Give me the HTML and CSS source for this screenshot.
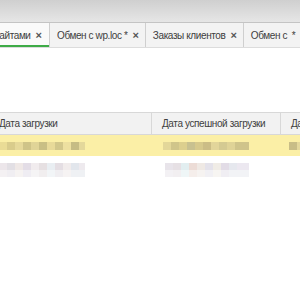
FILE: index.html
```html
<!DOCTYPE html>
<html lang="ru">
<head>
    <meta charset="UTF-8">
    <title>Обмен с сайтами</title>
    <link rel="stylesheet" href="styles.css">
</head>
<body>
    <div class="topbar"></div>
    <div class="tabs">
        <div class="tab active"><span class="label">Обмен с сайтами</span><span class="close">×</span></div>
        <div class="tab"><span class="label">Обмен с wp.loc *</span><span class="close">×</span></div>
        <div class="tab"><span class="label">Заказы клиентов</span><span class="close">×</span></div>
        <div class="tab"><span class="label">Обмен с &nbsp;*</span><span class="close">×</span></div>
    </div>

    <div class="content">
        <div class="grid">
            <div class="row head">
                <div class="cell c1">Дата загрузки</div>
                <div class="cell c2">Дата успешной загрузки</div>
                <div class="cell c3">Дата</div>
            </div>
            <div class="row current">
                <div class="cell c1"><span class="blur b1"></span></div>
                <div class="cell c2"><span class="blur b2"></span></div>
                <div class="cell c3"><span class="blur b3"></span></div>
            </div>
            <div class="row">
                <div class="cell c1"><span class="blur b4"></span></div>
                <div class="cell c2"><span class="blur b5"></span></div>
                <div class="cell c3"></div>
            </div>
        </div>
    </div>
</body>
</html>
```

FILE: styles.css
```css
body {
    margin: 0;
    font-family: "Liberation Sans", Arial, sans-serif;
    font-size: 10px;
    letter-spacing: -0.4px;
    color: #404040;
    background: #fff;
    overflow: hidden;
}
.topbar {
    height: 22px;
    background: linear-gradient(#cfcfcf, #e6e6e6);
    border-bottom: 1px solid #c4c4c4;
}
.tabs {
    display: flex;
    height: 24px;
    background: #f3f3f3;
    border-bottom: 1px solid #dcdcdc;
    white-space: nowrap;
}
.tab {
    display: flex;
    align-items: center;
    gap: 5px;
    padding: 0 6px 0 7px;
    border-right: 1px solid #cfcfcf;
    flex: none;
}
.tab.active {
    width: 50px;
    box-sizing: border-box;
    justify-content: flex-end;
    overflow: hidden;
    padding-right: 7px;
    background: #fafafa;
    box-shadow: inset 0 -2px 0 #3eab47;
}
.label {
    flex: none;
}
.close {
    font-weight: bold;
    font-size: 11px;
    letter-spacing: 0;
    color: #555;
}
.content {
    padding-top: 64px;
}
.grid {
    margin-left: -11px;
}
.row {
    display: flex;
    height: 21px;
    border-bottom: 1px solid #fff;
}
.row.head {
    background: #f2f2f2;
    border-top: 1px solid #d8d8d8;
    border-bottom: 1px solid #d8d8d8;
}
.row.current {
    background: #fbefa6;
}
.cell {
    display: flex;
    align-items: center;
    padding-left: 10px;
    flex: none;
    white-space: nowrap;
    overflow: hidden;
}
.c1 { width: 152px; }
.c2 { width: 118px; }
.c3 { width: 60px; }
.head .cell {
    border-right: 1px solid #d8d8d8;
}
.head .c3 { border-right: none; }
.blur {
    display: block;
    height: 8px;
}
.b1 {
    width: 86px;
    background: linear-gradient(90deg, #eadc96 0 8px, #d9cc8c 8px 16px, #e6d99a 16px 24px, #cfc488 24px 32px, #e0d497 32px 40px, #c9bf85 40px 48px, #e8da99 48px 56px, #d2c78b 56px 64px, #ede0a0 64px 72px, #c6bc84 72px 80px, #e4d89b 80px);
}
.b2 {
    width: 86px;
    margin-left: 2px;
    background: linear-gradient(90deg, #e3d799 0 8px, #d0c58a 8px 16px, #dccf8e 16px 24px, #c8c190 24px 32px, #d6c98c 32px 40px, #cbbd86 40px 48px, #e2d59a 48px 56px, #d4ca92 56px 64px, #dfd397 64px 72px, #cfc48b 72px);
}
.b3 {
    width: 16px;
    background: linear-gradient(90deg, #c8bd87 0 8px, #e4d89c 8px);
}
.b4 {
    width: 86px;
    height: 14px;
    margin-top: 4px;
    background:
        linear-gradient(90deg, #ece6ea 0 8px, #e2dfe4 8px 16px, #efe8e6 16px 24px, #e3dde6 24px 32px, #f1ecee 32px 40px, #e6e0e2 40px 48px, #e9eef2 48px 56px, #e4dee3 56px 64px, #f1ecec 64px 72px, #e2e6ec 72px 80px, #eeeaee 80px) top / 100% 7px no-repeat,
        linear-gradient(90deg, #f4f1f3 0 8px, #f0eef2 8px 16px, #f6f3f2 16px 24px, #efedf3 24px 32px, #f5f4f5 32px 40px, #f1eeef 40px 48px, #f2f5f7 48px 56px, #f0eef1 56px 64px, #f6f3f3 64px 72px, #eff1f4 72px) bottom / 100% 7px no-repeat;
}
.b5 {
    width: 84px;
    height: 14px;
    margin-top: 4px;
    margin-left: 4px;
    background:
        linear-gradient(90deg, #e8e4ea 0 8px, #e6e0e4 8px 16px, #e2eef0 16px 24px, #ecdcd6 24px 32px, #efe9e4 32px 40px, #e4e2ea 40px 48px, #f0ece6 48px 56px, #e2dce6 56px 64px, #e6e8ee 64px 72px, #ece8f0 72px) top / 100% 7px no-repeat,
        linear-gradient(90deg, #f3f1f4 0 8px, #f2eff1 8px 16px, #eff6f7 16px 24px, #f5eeeb 24px 32px, #f6f3f1 32px 40px, #f1f0f4 40px 48px, #f7f5f2 48px 56px, #f0eef3 56px 64px, #f2f3f6 64px) bottom / 100% 7px no-repeat;
}
```
